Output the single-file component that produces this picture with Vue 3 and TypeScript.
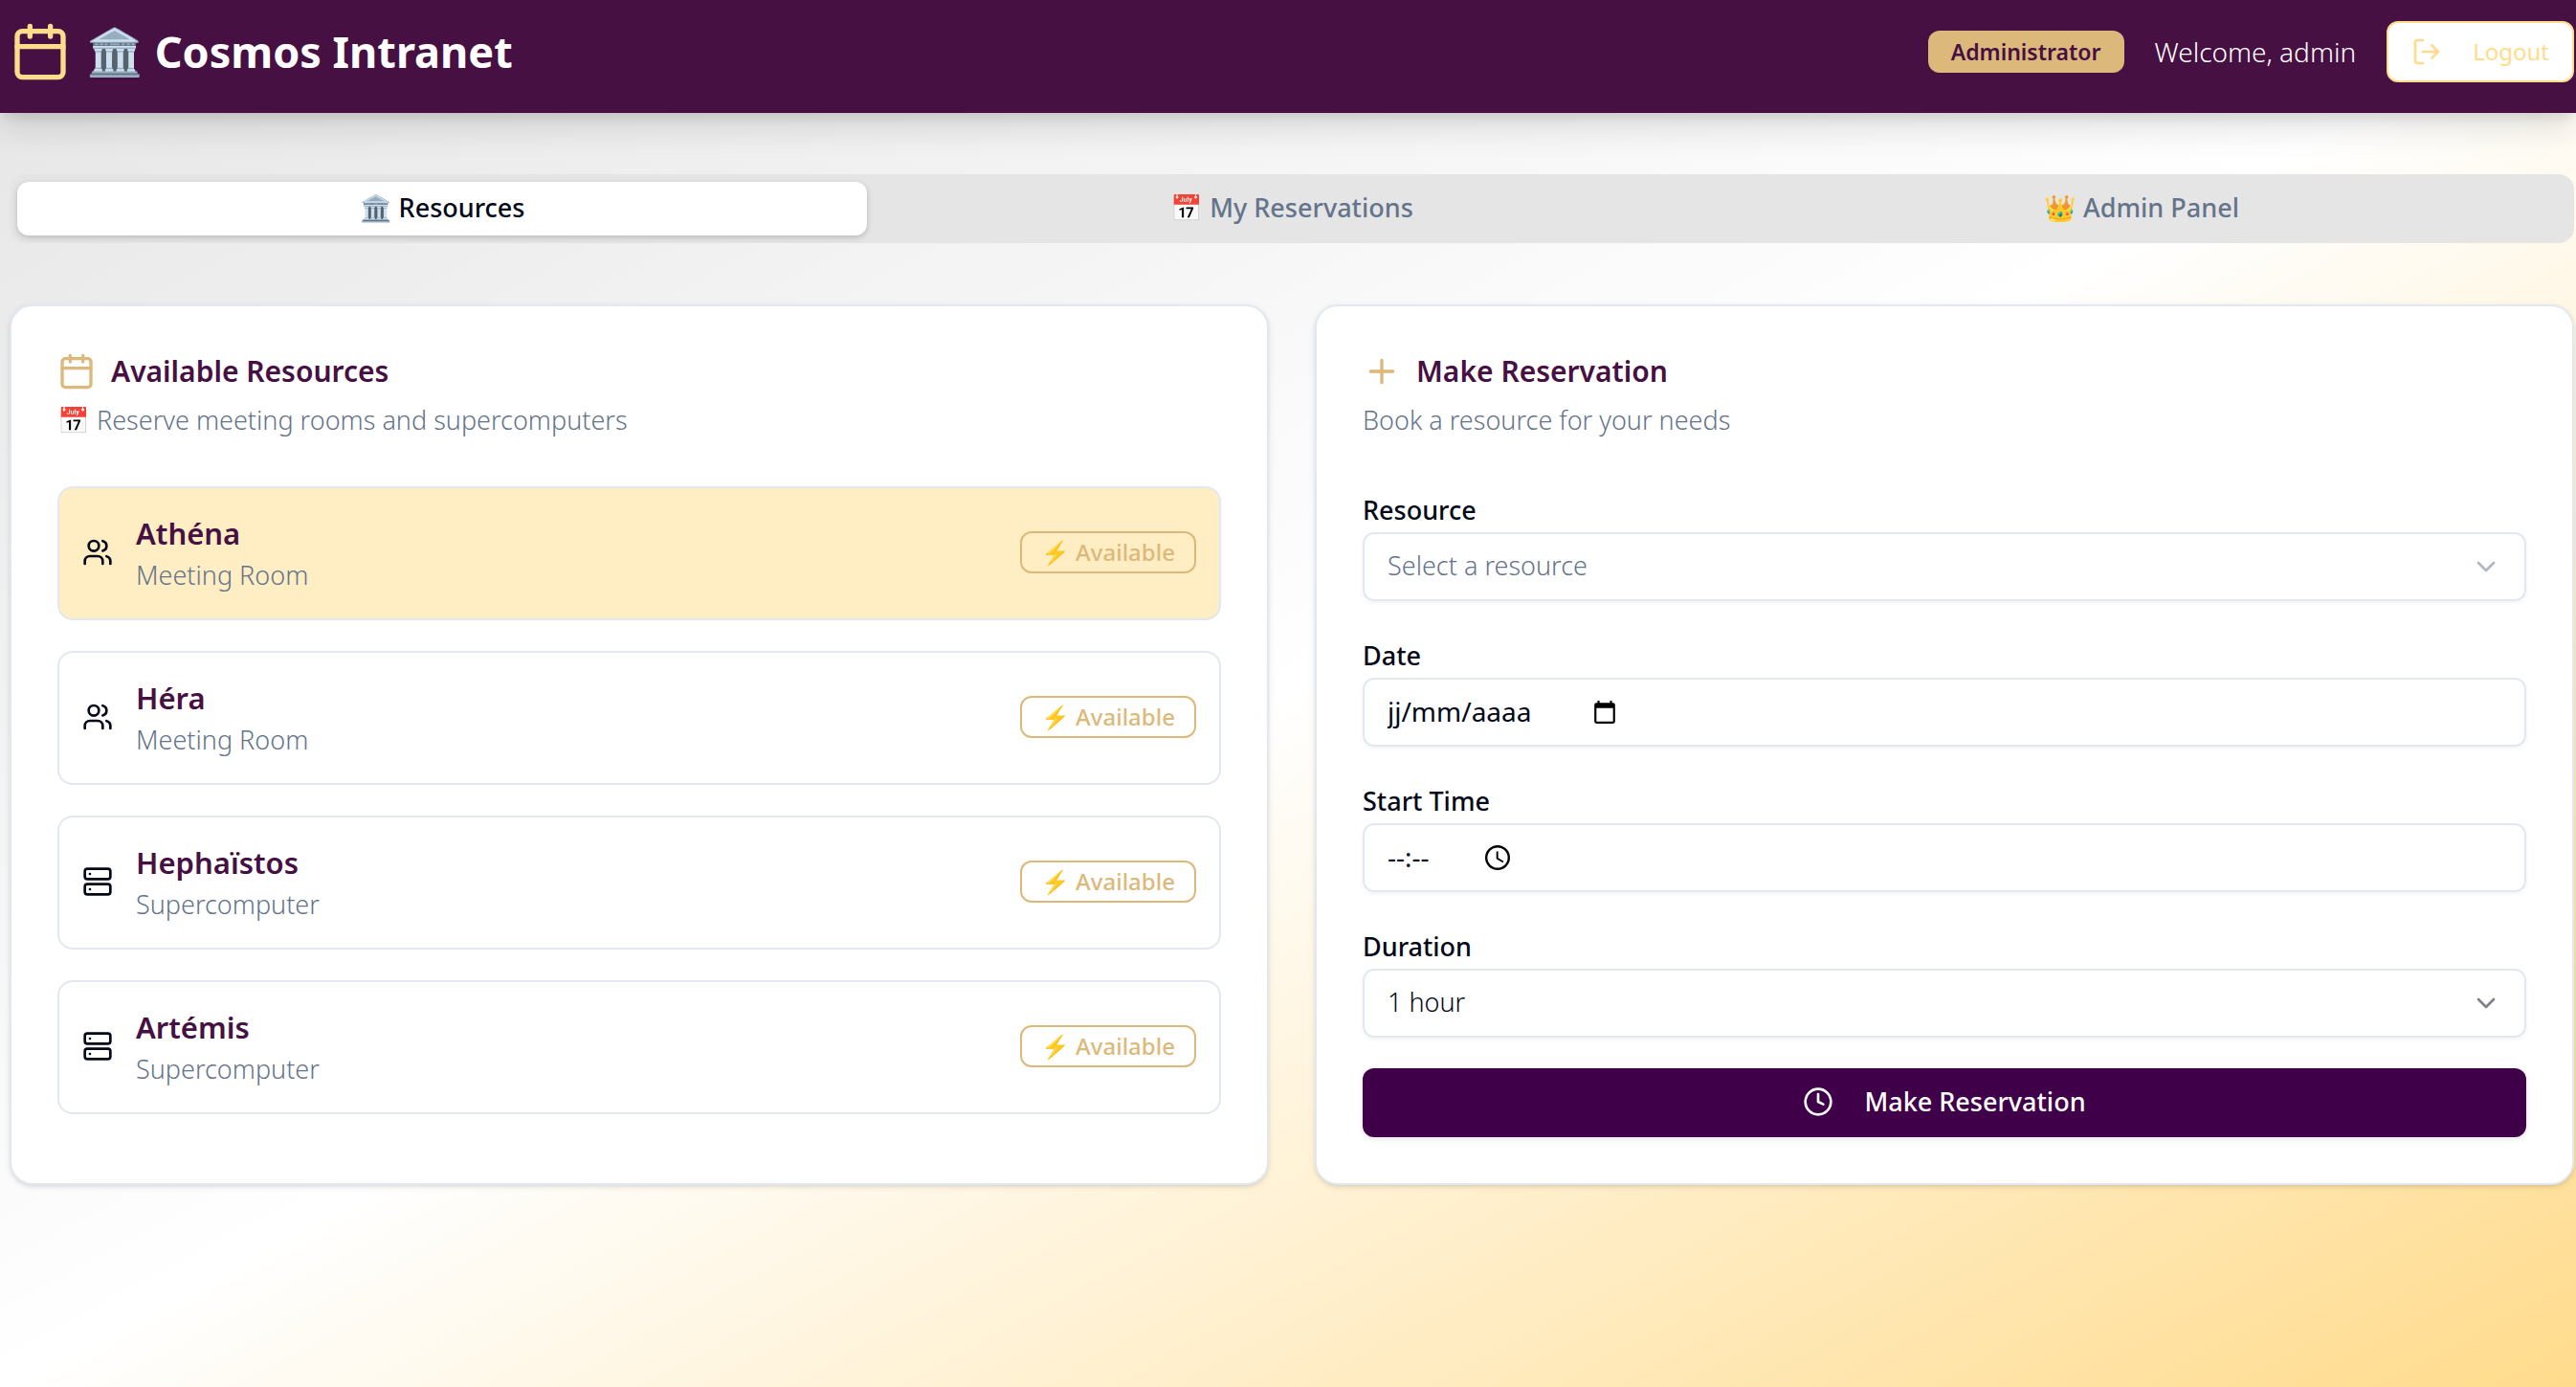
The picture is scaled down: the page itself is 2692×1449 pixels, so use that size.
<script setup lang="ts">
import { ref } from 'vue'

interface Tab {
  id: string
  emoji: string
  label: string
}

interface Resource {
  name: string
  kind: 'Meeting Room' | 'Supercomputer'
}

const tabs: Tab[] = [
  { id: 'resources', emoji: '🏛️', label: 'Resources' },
  { id: 'reservations', emoji: '📅', label: 'My Reservations' },
  { id: 'admin', emoji: '👑', label: 'Admin Panel' },
]

const resources: Resource[] = [
  { name: 'Athéna', kind: 'Meeting Room' },
  { name: 'Héra', kind: 'Meeting Room' },
  { name: 'Hephaïstos', kind: 'Supercomputer' },
  { name: 'Artémis', kind: 'Supercomputer' },
]

const durations = ['1 hour', '2 hours', '4 hours', '8 hours']

const activeTab = ref('resources')
const highlighted = ref('Athéna')
const resource = ref('')
const date = ref('')
const startTime = ref('')
const duration = ref('1 hour')
</script>

<template>
  <div class="page">
    <header class="topbar">
      <div class="brand">
        <svg class="icon icon-xl" viewBox="0 0 24 24" aria-hidden="true">
          <path d="M8 2v4M16 2v4M3 10h18" />
          <rect x="3" y="4" width="18" height="18" rx="2" />
        </svg>
        <h1><span class="emoji">🏛️</span> Cosmos Intranet</h1>
      </div>
      <div class="account">
        <span class="role">Administrator</span>
        <span class="welcome">Welcome, admin</span>
        <button type="button" class="logout">
          <svg class="icon icon-sm" viewBox="0 0 24 24" aria-hidden="true">
            <path d="M9 21H5a2 2 0 0 1-2-2V5a2 2 0 0 1 2-2h4M16 17l5-5-5-5M21 12H9" />
          </svg>
          Logout
        </button>
      </div>
    </header>

    <main class="content">
      <nav class="tabs" role="tablist">
        <button
          v-for="tab in tabs"
          :key="tab.id"
          type="button"
          role="tab"
          class="tab"
          :class="{ active: tab.id === activeTab }"
          :aria-selected="tab.id === activeTab"
          @click="activeTab = tab.id"
        >
          <span class="emoji">{{ tab.emoji }}</span> {{ tab.label }}
        </button>
      </nav>

      <div class="panels">
        <section class="card">
          <div class="card-head">
            <h2>
              <svg class="icon icon-lg" viewBox="0 0 24 24" aria-hidden="true">
                <path d="M8 2v4M16 2v4M3 10h18" />
                <rect x="3" y="4" width="18" height="18" rx="2" />
              </svg>
              Available Resources
            </h2>
            <p><span class="emoji">📅</span> Reserve meeting rooms and supercomputers</p>
          </div>
          <ul class="resources">
            <li
              v-for="item in resources"
              :key="item.name"
              class="resource"
              :class="{ highlighted: item.name === highlighted }"
              @mouseenter="highlighted = item.name"
            >
              <svg class="icon icon-sm" viewBox="0 0 24 24" aria-hidden="true">
                <template v-if="item.kind === 'Meeting Room'">
                  <path d="M16 21v-2a4 4 0 0 0-4-4H6a4 4 0 0 0-4 4v2" />
                  <circle cx="9" cy="7" r="4" />
                  <path d="M22 21v-2a4 4 0 0 0-3-3.87M16 3.13a4 4 0 0 1 0 7.75" />
                </template>
                <template v-else>
                  <rect x="2" y="2" width="20" height="8" rx="2" />
                  <rect x="2" y="14" width="20" height="8" rx="2" />
                  <path d="M6 6h.01M6 18h.01" />
                </template>
              </svg>
              <div class="resource-text">
                <h3>{{ item.name }}</h3>
                <p>{{ item.kind }}</p>
              </div>
              <span class="status"><span class="emoji">⚡</span> Available</span>
            </li>
          </ul>
        </section>

        <section class="card">
          <div class="card-head">
            <h2>
              <svg class="icon icon-lg" viewBox="0 0 24 24" aria-hidden="true">
                <path d="M5 12h14M12 5v14" />
              </svg>
              Make Reservation
            </h2>
            <p>Book a resource for your needs</p>
          </div>
          <form class="form" @submit.prevent>
            <div class="field">
              <label for="resource">Resource</label>
              <div class="control" :class="{ unset: !resource }">
                <select id="resource" v-model="resource">
                  <option value="" disabled>Select a resource</option>
                  <option v-for="item in resources" :key="item.name">{{ item.name }}</option>
                </select>
                <svg class="icon icon-sm chevron" viewBox="0 0 24 24" aria-hidden="true">
                  <path d="M6 9l6 6 6-6" />
                </svg>
              </div>
            </div>
            <div class="field">
              <label for="date">Date</label>
              <div class="control">
                <input id="date" v-model="date" class="date" type="text" placeholder="jj/mm/aaaa" />
                <svg class="picker" viewBox="0 0 24 24" aria-hidden="true">
                  <path
                    d="M20 3h-1V1h-2v2H7V1H5v2H4a2 2 0 0 0-2 2v16a2 2 0 0 0 2 2h16a2 2 0 0 0 2-2V5a2 2 0 0 0-2-2zm0 18H4V8h16z"
                  />
                </svg>
              </div>
            </div>
            <div class="field">
              <label for="start">Start Time</label>
              <div class="control">
                <input id="start" v-model="startTime" class="time" type="text" placeholder="--:--" />
                <svg class="picker" viewBox="0 0 24 24" aria-hidden="true">
                  <path
                    d="M12 0a12 12 0 1 0 0 24 12 12 0 0 0 0-24zm0 21.800a9.800 9.800 0 1 1 0-19.600 9.800 9.800 0 0 1 0 19.600zM12.600 6h-1.800v7.200l6.200 3.700.9-1.500-5.300-3.100z"
                  />
                </svg>
              </div>
            </div>
            <div class="field">
              <label for="duration">Duration</label>
              <div class="control">
                <select id="duration" v-model="duration">
                  <option v-for="item in durations" :key="item">{{ item }}</option>
                </select>
                <svg class="icon icon-sm chevron" viewBox="0 0 24 24" aria-hidden="true">
                  <path d="M6 9l6 6 6-6" />
                </svg>
              </div>
            </div>
            <button type="submit" class="submit">
              <svg class="icon icon-sm" viewBox="0 0 24 24" aria-hidden="true">
                <circle cx="12" cy="12" r="10" />
                <path d="M12 6v6l4 2" />
              </svg>
              Make Reservation
            </button>
          </form>
        </section>
      </div>
    </main>
  </div>
</template>

<style>
body {
  margin: 0;
}
</style>

<style scoped>
.page {
  --plum: #461042;
  --gold: #dcb97a;
  --honey: #ffdb8c;
  --ink: #020817;
  --slate: #64748b;
  --line: #e2e8f0;
  min-height: 100vh;
  background: linear-gradient(to bottom right, #e5e5e5, #ffffff 50%, #ffdb8c);
  color: var(--ink);
  font-family: 'Noto Sans', 'Open Sans', sans-serif;
  font-size: 27px;
  line-height: 40px;
}

.page *,
.page *::before {
  box-sizing: border-box;
}

h1,
h2,
h3,
p,
ul {
  margin: 0;
  padding: 0;
}

button,
input,
select {
  font: inherit;
  color: inherit;
}

button {
  cursor: pointer;
}

.icon {
  flex: none;
  fill: none;
  stroke: currentColor;
  stroke-width: 2;
  stroke-linecap: round;
  stroke-linejoin: round;
}

.icon-sm {
  width: 32px;
  height: 32px;
}

.icon-lg {
  width: 40px;
  height: 40px;
  color: var(--gold);
}

.icon-xl {
  width: 64px;
  height: 64px;
  color: var(--honey);
}

.topbar {
  display: flex;
  align-items: center;
  justify-content: space-between;
  padding: 22px 2px 32px 10px;
  background: var(--plum);
  color: #ffffff;
  box-shadow:
    0 20px 30px -2px rgba(0, 0, 0, 0.1),
    0 8px 12px -4px rgba(0, 0, 0, 0.1);
}

.brand,
.account {
  display: flex;
  align-items: center;
}

.brand {
  gap: 16px;
}

.account {
  gap: 32px;
}

h1 {
  font-size: 45px;
  line-height: 64px;
  font-weight: 700;
}

h1 .emoji {
  font-size: 48px;
  line-height: 1;
}

.role,
.status {
  line-height: 32px;
  border-radius: 12px;
}

.role {
  padding: 6px 24px;
  background: var(--gold);
  color: var(--plum);
  font-size: 23px;
  font-weight: 600;
}

.welcome {
  font-size: 28px;
  font-weight: 300;
}

.logout,
.submit {
  display: flex;
  align-items: center;
  justify-content: center;
  gap: 32px;
  border-radius: 12px;
}

.logout {
  height: 64px;
  padding: 0 24px;
  border: 2px solid var(--honey);
  background: #ffffff;
  color: var(--honey);
  font-size: 24px;
  font-weight: 400;
}

.content {
  padding: 64px 2px 64px 10px;
}

.tabs {
  display: grid;
  grid-template-columns: repeat(3, 1fr);
  padding: 8px;
  border-radius: 16px;
  background: #e5e5e5;
}

.tab {
  padding: 7px 24px 9px;
  border: 0;
  border-radius: 12px;
  background: none;
  color: var(--slate);
  font-weight: 500;
}

.tab.active {
  background: #ffffff;
  color: var(--ink);
  box-shadow: 0 2px 6px rgba(0, 0, 0, 0.2);
}

.panels {
  display: grid;
  grid-template-columns: repeat(2, 1fr);
  gap: 48px;
  margin-top: 64px;
}

.card {
  padding: 48px;
  border: 2px solid var(--line);
  border-radius: 24px;
  background: #ffffff;
  box-shadow:
    0 2px 6px rgba(0, 0, 0, 0.1),
    0 2px 4px -2px rgba(0, 0, 0, 0.1);
}

.card-head {
  margin-bottom: 49px;
}

.card-head h2 {
  display: flex;
  align-items: center;
  gap: 16px;
  font-size: 30px;
  line-height: 40px;
  font-weight: 600;
  color: var(--plum);
}

.card-head p {
  margin-top: 11px;
  color: var(--slate);
  font-weight: 300;
}

.resources {
  display: flex;
  flex-direction: column;
  gap: 32px;
  list-style: none;
}

.resource {
  display: flex;
  align-items: center;
  gap: 24px;
  padding: 23px 24px 25px;
  border: 2px solid var(--line);
  border-radius: 16px;
}

.resource.highlighted {
  background: #ffedc4;
}

.resource-text {
  flex: 1;
}

.resource h3 {
  font-size: 31px;
  line-height: 48px;
  font-weight: 600;
  color: var(--plum);
}

.resource p {
  color: var(--slate);
  font-weight: 300;
}

.status {
  padding: 4px 20px;
  border: 2px solid var(--gold);
  color: var(--gold);
  font-size: 24px;
  font-weight: 500;
}

.form {
  display: flex;
  flex-direction: column;
  gap: 32px;
}

.field {
  display: flex;
  flex-direction: column;
}

.field label {
  padding-top: 2px;
  line-height: 46px;
  font-weight: 500;
}

.control {
  position: relative;
  display: flex;
  align-items: center;
  height: 72px;
  border: 2px solid var(--line);
  border-radius: 12px;
  box-shadow: 0 2px 4px rgba(0, 0, 0, 0.05);
}

.control.unset {
  color: var(--slate);
}

.control select,
.control input {
  height: 100%;
  padding: 0 24px 2px;
  border: 0;
  border-radius: 10px;
  outline: 0;
  background: none;
}

.control input {
  font-size: 28px;
}

.control select {
  width: 100%;
  appearance: none;
  font-weight: 300;
}

.control input::placeholder {
  color: var(--ink);
  opacity: 1;
}

.control .date {
  width: 238px;
}

.control .time {
  width: 126px;
}

.chevron {
  position: absolute;
  right: 24px;
  opacity: 0.5;
  pointer-events: none;
}

.picker {
  width: 26px;
  height: 26px;
  fill: #000000;
}

.submit {
  height: 72px;
  padding: 0 24px 2px;
  border: 0;
  background: #3f0049;
  color: #ffffff;
  font-weight: 500;
  box-shadow: 0 2px 6px rgba(0, 0, 0, 0.1);
}
</style>
